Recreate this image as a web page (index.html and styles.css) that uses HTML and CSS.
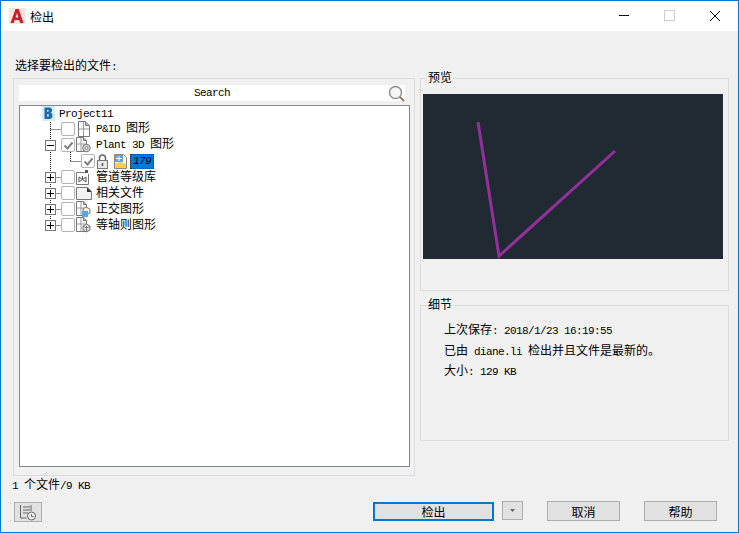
FILE: index.html
```html
<!DOCTYPE html>
<html lang="zh">
<head>
<meta charset="utf-8">
<title>检出</title>
<link rel="stylesheet" href="styles.css">
</head>
<body>
<div class="win">
  <header class="titlebar">
    <svg class="app-icon" width="16" height="16" viewBox="0 0 16 16"><rect width="16" height="16" fill="#fbe3df"/><path d="M1.500 15 6.500 1h3.200l4.800 14h-3.400l-.9-3H5.700l-1 3zM6.600 9.600h2.800L8 5z" fill="#c8202c" fill-rule="evenodd"/></svg>
    <span class="title-text">检出</span>
    <div class="win-btns">
      <svg class="w-min" width="12" height="12" viewBox="0 0 12 12"><path d="M1 5.500h10" stroke="#000" fill="none"/></svg>
      <svg width="12" height="12" viewBox="0 0 12 12"><rect x=".5" y=".5" width="10" height="10" stroke="#ccc" fill="none"/></svg>
      <svg width="12" height="12" viewBox="0 0 12 12"><path d="M1 1l10 10M11 1 1 11" stroke="#000" fill="none"/></svg>
    </div>
  </header>

  <main class="content">
    <section class="left">
      <div class="pick-label">选择要检出的文件<span class="lt">:</span></div>
      <div class="pick-box">
        <div class="search">
          <span class="lt">Search</span>
          <svg class="search-icon" width="17" height="17" viewBox="0 0 17 17"><circle cx="7.500" cy="7.500" r="6" fill="#f6f6f6" stroke="#8f8f8f" stroke-width="1.500"/><path d="M12 12l4 4" stroke="#9a7a5a" stroke-width="2"/></svg>
        </div>
        <div class="tree">
          <svg class="tree-lines" width="140" height="140" viewBox="0 0 140 140"><path d="M30.500 16v104M30.500 23.500H42M30.500 71.500H42M30.500 87.500H42M30.500 103.500H42M30.500 119.500H42M50.500 46v9.500M50.500 55.500H61" stroke="#222" stroke-dasharray="1 1" fill="none"/></svg>
          <div class="row root">
            <svg width="13" height="15" viewBox="0 0 13 15"><rect width="13" height="15" fill="#d5ecfa"/><path d="M2.500 1.500h5c3 0 3.500 4.500 1 5.300 3 .7 2.700 6.200-1 6.200h-5z" fill="#1f6aa8"/><path d="M5 4h1.500v1.800H5zM5 8.300h1.800v2.300H5z" fill="#d5ecfa"/></svg>
            <span class="lt label-root">Project11</span>
          </div>
          <div class="row">
            <span class="exp none"></span><span class="chk"></span>
            <span class="cell"><svg class="ico-narrow" width="12" height="16" viewBox="0 0 12 16"><path d="M.5.500h7l4 4v11H.500z" fill="#fff" stroke="#777"/><path d="M7.500.500v4h4" fill="#bbb" stroke="#777"/><path d="M5.500 1v14M1 8h10" stroke="#999"/></svg></span>
            <span class="lbl"><span class="lt">P&amp;ID </span>图形</span>
          </div>
          <div class="row">
            <span class="exp minus"></span><span class="chk checked"><svg width="11" height="11" viewBox="0 0 11 11"><path d="M1.500 5.500 4.500 8.500 9.500 2.500" stroke="#808080" stroke-width="2" fill="none"/></svg></span>
            <span class="cell"><svg width="15" height="16" viewBox="0 0 15 16"><path d="M.5.500h7l3 3v11H.500z" fill="#fff" stroke="#777"/><path d="M7.500.500v3h3" fill="#bbb" stroke="#777"/><path d="M5 1v13M1 7h9" stroke="#999"/><circle cx="10.500" cy="11" r="3.800" fill="#ddd" stroke="#777"/><circle cx="10.500" cy="11" r="1.500" fill="#fff" stroke="#777"/></svg></span>
            <span class="lbl"><span class="lt">Plant 3D </span>图形</span>
          </div>
          <div class="row sub">
            <span class="chk checked"><svg width="11" height="11" viewBox="0 0 11 11"><path d="M1.500 5.500 4.500 8.500 9.500 2.500" stroke="#808080" stroke-width="2" fill="none"/></svg></span>
            <svg class="lock" width="11" height="15" viewBox="0 0 11 15"><path d="M2.500 7V4a3 3 0 0 1 6 0v3" fill="none" stroke="#666" stroke-width="1.500"/><rect x=".5" y="6.500" width="10" height="8" fill="#e8e8e8" stroke="#777"/><path d="M5.500 9v3" stroke="#555" stroke-width="1.500"/></svg>
            <svg class="thumb" width="13" height="15" viewBox="0 0 13 15"><path d="M.5.500h9l3 3v11H.500z" fill="#fff" stroke="#888"/><rect x="1" y="1" width="8" height="7" fill="#5aa9e6"/><path d="M1 9l6-1 5 2v4H1z" fill="#f6cf52"/><path d="M5 2v5M2 4.500h6" stroke="#fff"/></svg>
            <span class="sel lt">179</span>
          </div>
          <div class="row">
            <span class="exp plus"></span><span class="chk"></span>
            <span class="cell"><svg width="13" height="16" viewBox="0 0 13 16"><path d="M.5 3.500h8M12.500 5v10.500H.500v-12" fill="#fff" stroke="#777"/><path d="M9 1h3v3H9z" fill="#555"/><path d="M3 8v5l3.500-2.500L3 8M10 8v5l-3.500-2.500zM6.500 7v3.500" stroke="#555" fill="none"/></svg></span>
            <span class="lbl">管道等级库</span>
          </div>
          <div class="row">
            <span class="exp plus"></span><span class="chk"></span>
            <span class="cell"><svg width="16" height="13" viewBox="0 0 16 13"><path d="M.5.500h11l4 4v8H.500z" fill="#f2f2f2" stroke="#777"/><path d="M11 .5l4.500 4.500H11z" fill="#333"/></svg></span>
            <span class="lbl">相关文件</span>
          </div>
          <div class="row">
            <span class="exp plus"></span><span class="chk"></span>
            <span class="cell"><svg width="15" height="16" viewBox="0 0 15 16"><path d="M.5.500h7l3 3v11H.500z" fill="#fff" stroke="#777"/><path d="M7.500.500v3h3" fill="#bbb" stroke="#777"/><path d="M5 1v13M1 7h9" stroke="#999"/><path d="M7 8l3-2 4 2v4l-4 2-3-2z" fill="#eee" stroke="#777"/><rect x="6" y="10" width="6" height="6" fill="#55a8e8"/></svg></span>
            <span class="lbl">正交图形</span>
          </div>
          <div class="row">
            <span class="exp plus"></span><span class="chk"></span>
            <span class="cell"><svg width="15" height="16" viewBox="0 0 15 16"><path d="M.5.500h7l3 3v11H.500z" fill="#fff" stroke="#777"/><path d="M7.500.500v3h3" fill="#bbb" stroke="#777"/><path d="M5 1v13M1 7h9" stroke="#999"/><path d="M7 9l3.500-2 3.500 2v4l-3.500 2L7 13zM7 9l3.500 2L14 9M10.500 11v4" fill="#ddd" stroke="#777"/></svg></span>
            <span class="lbl">等轴则图形</span>
          </div>
        </div>
      </div>
      <div class="status"><span class="lt">1 </span>个文件<span class="lt">/9 KB</span></div>
    </section>

    <aside class="right">
      <fieldset class="group preview">
        <legend>预览</legend>
        <div class="canvas">
          <svg width="300" height="165" viewBox="0 0 300 165"><path d="M55 28 76 162 192 57" fill="none" stroke="#93309c" stroke-width="3"/></svg>
        </div>
      </fieldset>
      <fieldset class="group details">
        <legend>细节</legend>
        <div class="info">上次保存<span class="lt">: 2018/1/23 16:19:55</span></div>
        <div class="info">已由<span class="lt"> diane.li </span>检出并且文件是最新的。</div>
        <div class="info">大小<span class="lt">: 129 KB</span></div>
      </fieldset>
    </aside>
  </main>

  <footer class="actions">
    <button class="btn log" type="button"><svg width="18" height="17" viewBox="0 0 18 17"><path d="M1.500 1v13h6M4 3h7M4 6h7M4 9h5M12 1v6" fill="none" stroke="#666"/><circle cx="12.500" cy="12" r="4" fill="#eee" stroke="#666"/><path d="M12.500 10v2.500h2" fill="none" stroke="#666"/></svg></button>
    <button class="btn primary" type="button">检出</button>
    <button class="btn drop" type="button"><svg width="5" height="3" viewBox="0 0 5 3"><path d="M0 0h5L2.500 3z" fill="#666"/></svg></button>
    <button class="btn cancel" type="button">取消</button>
    <button class="btn help" type="button">帮助</button>
  </footer>
</div>
</body>
</html>
```
FILE: styles.css
```css
* { box-sizing: border-box; }
html, body { margin: 0; padding: 0; }
body { font-family: "Noto Sans CJK SC", "Liberation Sans", sans-serif; font-size: 12px; color: #000; }
.lt { font-family: "Liberation Mono", monospace; font-size: 11px; letter-spacing: -0.6px; }

.win { width: 739px; height: 533px; border: 1px solid #0078d7; background: #f0f0f0; display: flex; flex-direction: column; }

.titlebar { height: 30px; flex: none; background: #fff; display: flex; align-items: center; padding-left: 8px; }
.app-icon { margin-top: -1px; }
.title-text { margin-left: 5px; line-height: 14px; margin-top: 1px; }
.win-btns { margin-left: auto; display: flex; align-items: center; gap: 33px; padding-right: 17px; }
.w-min { margin-right: 1px; }

.content { flex: 1; display: flex; gap: 5px; padding-left: 12px; min-height: 0; }

.left { width: 402px; padding-top: 27px; }
.pick-label { height: 14px; line-height: 14px; margin-left: 2px; margin-bottom: 6px; }
.pick-box { height: 398px; border: 1px solid #dcdcdc; padding: 6px 0 8px 5px; display: flex; flex-direction: column; }
.search { height: 16px; flex: none; margin-right: 9px; background: #fff; display: flex; align-items: center; justify-content: center; line-height: 14px; position: relative; }
.search-icon { position: absolute; right: 0; top: 0; }
.tree { margin-top: 4px; margin-right: 4px; height: 363px; border: 1px solid #828790; background: #fff; position: relative; }
.tree-lines { position: absolute; left: 0; top: 0; pointer-events: none; }

.row { height: 16px; display: flex; align-items: center; padding-left: 25px; position: relative; }
.row.root { height: 15px; padding-left: 22px; }
.row.sub { padding-left: 61px; }
.label-root { margin-left: 4px; line-height: 14px; }
.exp { width: 11px; height: 11px; margin-right: 5px; flex: none; border: 1px solid #777; background: #fff; position: relative; }
.exp.none { border: 0; background: none; }
.exp.minus::before, .exp.plus::before { content: ""; position: absolute; left: 1px; right: 1px; top: 4px; height: 1px; background: #000; }
.exp.plus::after { content: ""; position: absolute; top: 1px; bottom: 1px; left: 4px; width: 1px; background: #000; }
.chk { width: 14px; height: 14px; flex: none; border: 1px solid #b4b4b4; border-radius: 2px; background: #fff; display: flex; align-items: center; justify-content: center; }
.cell { width: 21px; flex: none; display: flex; align-items: center; padding-left: 1px; }
.ico-narrow { margin-left: 2px; }
.lbl { line-height: 14px; margin-top: -2px; white-space: nowrap; }
.lock { flex: none; margin-left: 2px; }
.thumb { flex: none; margin-left: 6px; }
.sel { margin-left: 3px; width: 24px; height: 15px; line-height: 15px; background: #0078d7; color: #000; font-style: italic; text-align: center; outline: 1px dotted #333; outline-offset: -1px; }

.status { margin-top: 1px; margin-left: -1px; line-height: 14px; white-space: nowrap; }

.right { width: 309px; padding-top: 40px; display: flex; flex-direction: column; gap: 7px; }
.group { margin: 0; border: 1px solid #dcdcdc; min-width: 0; padding: 0 0 0 2px; }
.group legend { padding: 0 1px; margin-left: 4px; line-height: 14px; height: 14px; position: relative; top: -1px; }
.preview { height: 220px; padding-top: 9px; }
.canvas { width: 300px; height: 165px; background: #212a33; }
.canvas svg { display: block; }
.details { height: 143px; padding-top: 10px; }
.info { height: 20.500px; line-height: 14px; margin-left: 21px; white-space: nowrap; }

.actions { flex: none; height: 31px; display: flex; align-items: flex-start; padding-left: 13px; }
.btn { font: inherit; color: #000; background: #e1e1e1; border: 1px solid #adadad; padding: 0; margin: 0; display: flex; align-items: center; justify-content: center; }
.log { width: 28px; height: 20px; margin-top: 1px; }
.primary { width: 121px; height: 19px; margin-top: 1px; margin-left: 331px; border: 2px solid #0078d7; }
.drop { width: 21px; height: 19px; margin-left: 8px; }
.cancel { width: 73px; height: 20px; margin-left: 24px; }
.help { width: 73px; height: 20px; margin-left: 24px; }
```
